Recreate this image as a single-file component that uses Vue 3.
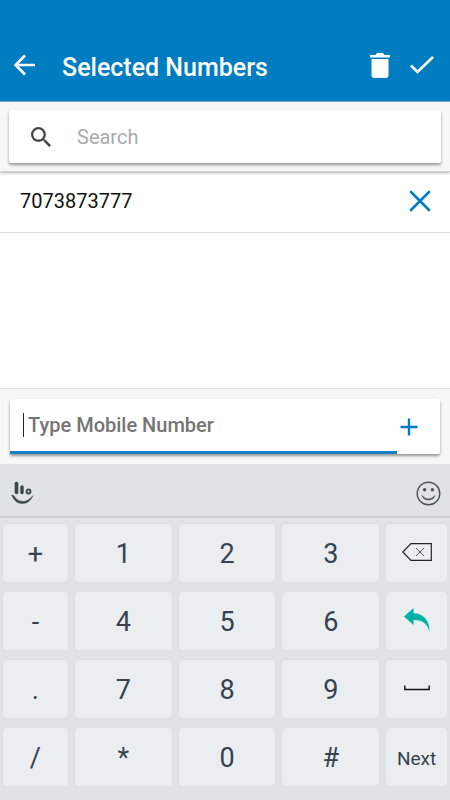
<script setup>
import { ref, computed } from 'vue'

const query = ref('')
const draft = ref('')
const numbers = ref(['7073873777'])

const visible = computed(() => numbers.value.filter((n) => n.includes(query.value)))

const keys = [
  '+', '1', '2', '3', 'Backspace',
  '-', '4', '5', '6', 'Undo',
  '.', '7', '8', '9', 'Space',
  '/', '*', '0', '#', 'Next',
]

function press(key) {
  if (key === 'Backspace' || key === 'Undo') draft.value = draft.value.slice(0, -1)
  else if (key === 'Space') draft.value += ' '
  else if (key === 'Next') add()
  else draft.value += key
}

function add() {
  const value = draft.value.trim()
  if (value) numbers.value.push(value)
  draft.value = ''
}

function remove(number) {
  numbers.value = numbers.value.filter((n) => n !== number)
}
</script>

<template>
  <div class="screen">
    <header class="bar">
      <button class="icon-btn" type="button" aria-label="Back">
        <svg width="22" height="22" viewBox="0 0 22 22"><path d="M21 11H2M11 1.5L1.5 11L11 20.5" fill="none" stroke="#fff" stroke-width="2.6" /></svg>
      </button>
      <h1 class="title">Selected Numbers</h1>
      <button class="icon-btn" type="button" aria-label="Delete all" @click="numbers = []">
        <svg width="20" height="25" viewBox="0 0 20 25"><path d="M0 2h5.500L7 0h6l1.500 2H20v2.500H0zM1.500 6h17v16q0 3-3 3h-11q-3 0-3-3z" fill="#fff" /></svg>
      </button>
      <button class="icon-btn" type="button" aria-label="Done">
        <svg width="24" height="18" viewBox="0 0 24 18"><path d="M1 9.500L7.500 16L23 1" fill="none" stroke="#fff" stroke-width="2.600" /></svg>
      </button>
    </header>

    <section class="search-area">
      <label class="card search">
        <svg width="20" height="20" viewBox="3 3 17.500 17.500"><path d="M15.500 14h-.79l-.28-.27A6.470 6.470 0 0 0 16 9.500 6.500 6.500 0 1 0 9.500 16c1.610 0 3.090-.59 4.230-1.570l.27.28v.79l5 4.990L20.490 19l-4.990-5zm-6 0C7.010 14 5 11.990 5 9.500S7.010 5 9.500 5 14 7.010 14 9.500 11.990 14 9.500 14z" fill="#424242" /></svg>
        <input v-model="query" class="field" type="search" placeholder="Search" aria-label="Search" />
      </label>
    </section>

    <ul class="list">
      <li v-for="number in visible" :key="number" class="row">
        <span>{{ number }}</span>
        <button class="icon-btn" type="button" :aria-label="`Remove ${number}`" @click="remove(number)">
          <svg width="22" height="22" viewBox="0 0 22 22"><path d="M2 2L20 20M20 2L2 20" stroke="#007cc0" stroke-width="2.600" stroke-linecap="round" /></svg>
        </button>
      </li>
    </ul>

    <form class="entry-area" @submit.prevent="add">
      <div class="card entry">
        <label class="entry-box">
          <span class="caret" aria-hidden="true"></span>
          <input v-model="draft" class="field strong" type="tel" placeholder="Type Mobile Number" aria-label="Type Mobile Number" />
        </label>
        <button class="icon-btn add" type="submit" aria-label="Add number">
          <svg width="18" height="18" viewBox="0 0 18 18"><path d="M9 0.500V17.500M0.500 9H17.500" stroke="#007cc0" stroke-width="2.400" /></svg>
        </button>
      </div>
    </form>

    <section class="keyboard" aria-label="Keyboard">
      <div class="tools">
        <button class="icon-btn" type="button" aria-label="Keyboard menu">
          <svg width="24" height="24" viewBox="0 0 24 24" fill="none" stroke="#37474a" stroke-linecap="round">
            <path d="M6.500 2.500V11.500" stroke-width="3.600" />
            <path d="M12 6V11.500" stroke-width="3.400" />
            <circle cx="18.500" cy="10.500" r="2" stroke-width="1.800" />
            <path d="M2 14.500Q5 22.500 12.500 22.500Q19.500 22.500 22.800 14.800Q18 20.800 12.500 20.600Q7 20.400 3.500 14.400Q2.500 13.500 2 14.500Z" fill="#37474a" stroke-width="0.600" />
          </svg>
        </button>
        <button class="icon-btn" type="button" aria-label="Emoji">
          <svg width="25" height="25" viewBox="0 0 25 25">
            <circle cx="12.500" cy="12.500" r="11.300" fill="none" stroke="#4b5356" stroke-width="1.400" />
            <circle cx="8.600" cy="8.800" r="1.700" fill="#4b5356" />
            <circle cx="16.400" cy="8.800" r="1.700" fill="#4b5356" />
            <path d="M5.800 14.500Q12.500 21.500 19.200 14.500Q17.500 19 12.500 19Q7.500 19 5.800 14.500Z" fill="#4b5356" stroke="#4b5356" stroke-width="0.500" />
          </svg>
        </button>
      </div>
      <div class="keys">
        <button v-for="key in keys" :key="key" class="key" :class="{ small: key === 'Next' }" type="button" :aria-label="key" @click="press(key)">
          <svg v-if="key === 'Backspace'" width="30" height="18" viewBox="0 0 30 18"><path d="M9 .7H29.300V17.300H9L.8 9Z" fill="none" stroke="#222" stroke-width="1.200" /><path d="M14 5L22 13M22 5L14 13" stroke="#555" stroke-width="1" /></svg>
          <svg v-else-if="key === 'Undo'" width="26" height="24" viewBox="0 0 26 24"><path d="M0 8.500L9.500 0V5.200C19 5.200 26 12.500 25.500 24C23.500 15.500 18 11.500 9.500 12V17Z" fill="#00b1a8" /></svg>
          <svg v-else-if="key === 'Space'" width="26" height="6" viewBox="0 0 26 6"><path d="M.8 0.500V4.500H25.200V.500" fill="none" stroke="#111" stroke-width="1.400" /></svg>
          <template v-else>{{ key }}</template>
        </button>
      </div>
    </section>
  </div>
</template>

<style>
body {
  margin: 0;
}
</style>

<style scoped>
.screen {
  display: flex;
  flex-direction: column;
  min-height: 100vh;
  background: #fff;
  color: #111;
  font-family: Roboto, "Liberation Sans", sans-serif;
}

button {
  border: 0;
  padding: 0;
  background: none;
  font: inherit;
  color: inherit;
  cursor: pointer;
}

.icon-btn {
  display: flex;
  align-items: center;
  justify-content: center;
}

.bar {
  display: flex;
  align-items: center;
  gap: 20px;
  padding: 32px 16px 3px 14px;
  height: 66px;
  border-bottom: 1px solid #7fb5d8;
  background: #007cc0;
}

.title {
  flex: 1;
  margin: 0;
  padding: 5px 0 0 6px;
  color: #fff;
  font-size: 25px;
  font-weight: 500;
  line-height: 30px;
}

.search-area {
  padding: 8px 9px;
  background: #f7f7f7;
  border-bottom: 1px solid #cfcfcf;
  box-shadow: 0 1px 3px rgba(0, 0, 0, 0.3);
}

.card {
  display: flex;
  border-radius: 2px;
  background: #fff;
  box-shadow: 0 2px 3px rgba(0, 0, 0, 0.4);
}

.search {
  align-items: center;
  gap: 26px;
  padding: 0 22px;
  height: 53px;
}

.field {
  flex: 1;
  min-width: 0;
  border: 0;
  padding: 0;
  outline: 0;
  background: none;
  color: #111;
  font: 400 20px/24px Roboto, "Liberation Sans", sans-serif;
}

.field::placeholder {
  color: #aaa;
  opacity: 1;
}

.strong {
  font-weight: 500;
}

.strong::placeholder {
  color: #757575;
}

.list {
  flex: 1;
  margin: 0;
  padding: 0;
  list-style: none;
}

.row {
  display: flex;
  align-items: center;
  justify-content: space-between;
  padding: 0 19px 2px 20px;
  height: 58px;
  border-bottom: 1px solid #ddd;
  font-size: 20px;
}

.entry-area {
  padding: 10px;
  border-top: 1px solid #ddd;
  background: #f7f7f7;
}

.entry {
  height: 55px;
}

.entry-box {
  display: flex;
  flex: 1;
  align-items: center;
  gap: 4px;
  padding-left: 13px;
  border-bottom: 3px solid #1282c3;
}

.caret {
  width: 1px;
  height: 24px;
  background: #222;
}

.add {
  width: 43px;
  padding-right: 20px;
}

.keyboard {
  background: #dfe3e4;
}

.tools {
  display: flex;
  align-items: center;
  justify-content: space-between;
  padding: 6px 9px 0 10px;
  height: 46px;
  border-bottom: 2px solid #cbd0d1;
}

.keys {
  display: grid;
  grid-template-columns: 65fr 97fr 97fr 97fr 61fr;
  grid-auto-rows: 58px;
  gap: 10px 7px;
  padding: 6px 3px 14px;
}

.key {
  display: flex;
  align-items: center;
  justify-content: center;
  min-width: 0;
  border-radius: 4px;
  padding-top: 2px;
  background: #ebeef1;
  box-shadow: 0 0 1px #cdd3d6;
  color: #36424f;
  font-size: 27px;
  font-weight: 400;
}

.key svg {
  margin-bottom: 4px;
}

.small {
  font-size: 19px;
}
</style>
